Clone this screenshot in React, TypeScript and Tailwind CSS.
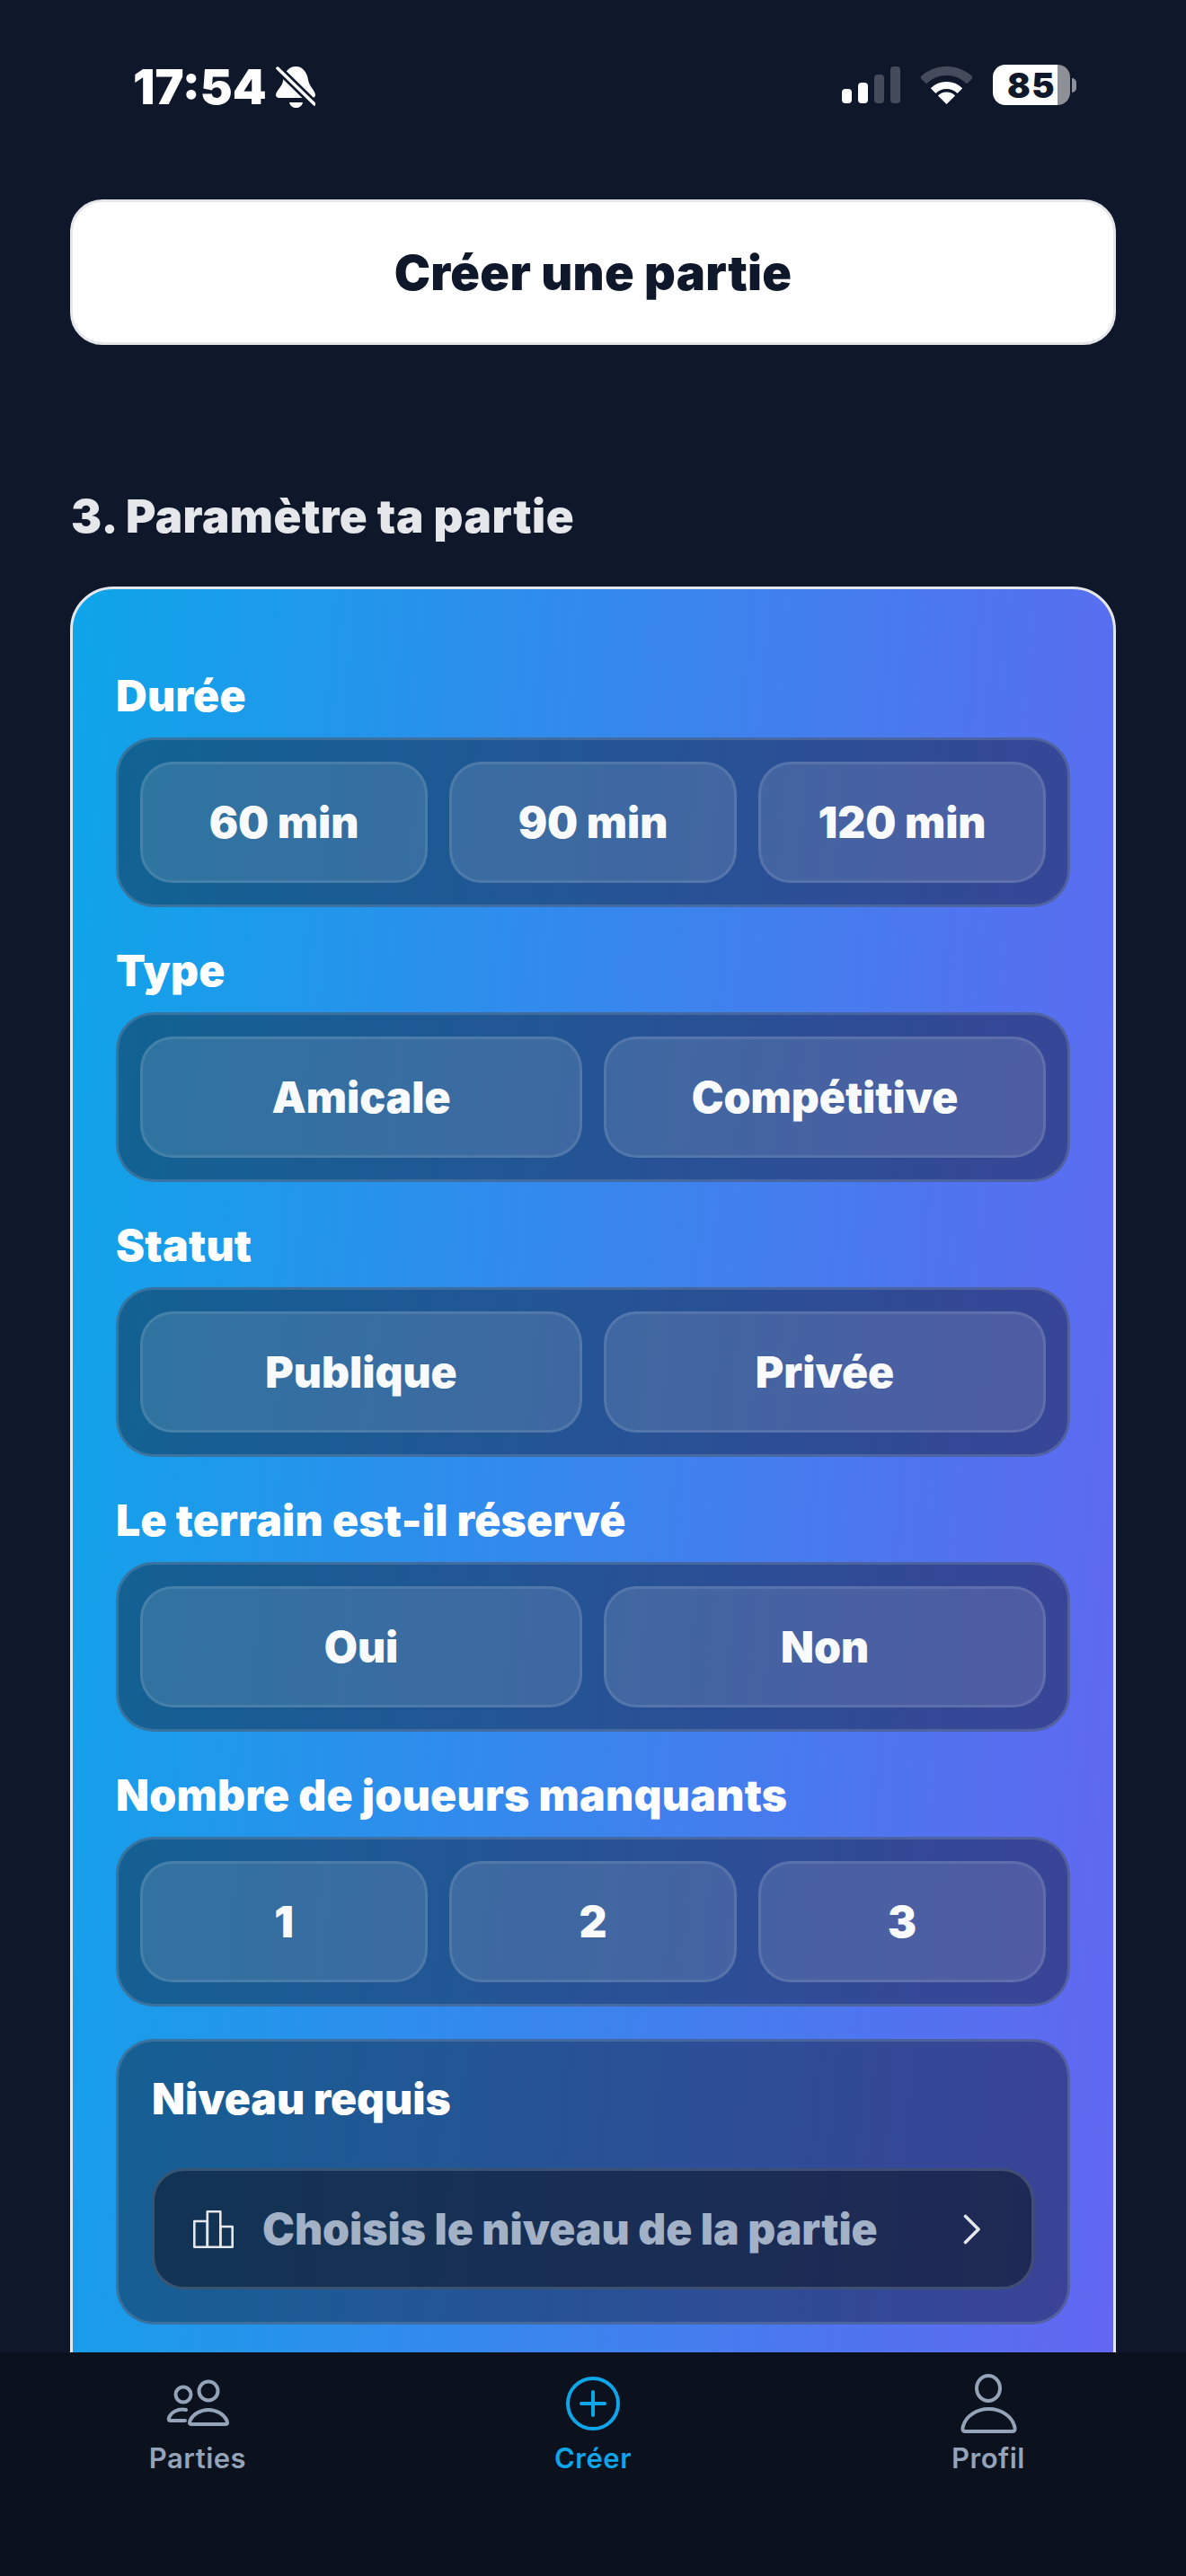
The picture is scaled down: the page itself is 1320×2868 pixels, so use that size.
const rows = [
  { label: "Durée", options: ["60 min", "90 min", "120 min"] },
  { label: "Type", options: ["Amicale", "Compétitive"] },
  { label: "Statut", options: ["Publique", "Privée"] },
  { label: "Le terrain est-il réservé", options: ["Oui", "Non"] },
  { label: "Nombre de joueurs manquants", options: ["1", "2", "3"] },
];

function BellOff() {
  return (
    <svg width="44" height="48" viewBox="0 0 44 48" fill="none">
      <path d="M22 1C31 1 35 9 36 16C37 23 44 28 44 33C44 35 42 36 40 36H4C2 36 0 35 0 33C0 28 7 24 8 17C9 8 14 1 22 1Z" fill="#fff" />
      <path d="M15 41H30C29 45 26 47 22.5 47C19 47 16 45 15 41Z" fill="#fff" />
      <path d="M2 3L43 43" stroke="#0f172a" strokeWidth="9" />
      <path d="M2 3L43 43" stroke="#fff" strokeWidth="3.5" strokeLinecap="round" />
    </svg>
  );
}

function Signal() {
  return (
    <svg width="65" height="41" viewBox="0 0 65 41">
      <rect x="0" y="25" width="11" height="16" rx="4" fill="#fff" />
      <rect x="18" y="18" width="11" height="23" rx="4" fill="#fff" />
      <rect x="36" y="9" width="11" height="32" rx="4" fill="#454b5a" />
      <rect x="54" y="0" width="11" height="41" rx="4" fill="#454b5a" />
    </svg>
  );
}

function Wifi() {
  return (
    <svg width="57" height="42" viewBox="0 0 57 42" fill="none">
      <path d="M2.3 15.8A37 37 0 0 1 54.7 15.8" stroke="#454b5a" strokeWidth="10" />
      <path d="M13.65 27.15A21 21 0 0 1 43.35 27.15" stroke="#fff" strokeWidth="8" />
      <path d="M28.5 42L18.9 32.4A13.5 13.5 0 0 1 38.1 32.4Z" fill="#fff" />
    </svg>
  );
}

function Battery() {
  return (
    <div className="flex items-center">
      <div className="flex h-[45px] w-[86px] items-center justify-center rounded-[14px] bg-[linear-gradient(to_right,#ffffff_84%,#8e9097_84%)] text-[38px] leading-none font-black tracking-[1.5px] text-[#0f172a]">
        85
      </div>
      <div className="ml-[2px] h-[16px] w-[5px] rounded-r-full bg-[#8e9097]" />
    </div>
  );
}

function LevelIcon() {
  return (
    <svg width="45" height="42" viewBox="0 0 45 42" fill="none" stroke="#e5e7eb" strokeWidth="2.6" strokeLinejoin="round">
      <rect x="1.3" y="12" width="14.5" height="28.7" />
      <rect x="15.8" y="1.3" width="14.5" height="39.4" />
      <rect x="30.3" y="18" width="13.4" height="22.7" />
    </svg>
  );
}

function Chevron() {
  return (
    <svg width="20" height="34" viewBox="0 0 20 34" fill="none" stroke="#e5e7eb" strokeWidth="3.6" strokeLinecap="round" strokeLinejoin="round">
      <path d="M2.5 2.5L17 17L2.5 31.5" />
    </svg>
  );
}

function PartiesIcon() {
  return (
    <svg width="80" height="66" viewBox="0 0 80 66" fill="none" stroke="#94a3b8" strokeWidth="4" strokeLinecap="round" strokeLinejoin="round">
      <circle cx="52" cy="19" r="10.5" />
      <circle cx="24" cy="23" r="8.5" />
      <path d="M33 56C30 56 31 53 32 51C35 45 43 40 52 40C61 40 69 45 72 51C73 53 74 56 71 56Z" />
      <path d="M27 40C18 38 10 43 8 49C7 51 8 52 10 52H26" />
    </svg>
  );
}

function CreateIcon() {
  return (
    <svg width="66" height="66" viewBox="0 0 66 66" fill="none" stroke="#0ea5e9" strokeWidth="4" strokeLinecap="round">
      <circle cx="33" cy="33" r="28" />
      <path d="M33 20V46M20 33H46" />
    </svg>
  );
}

function ProfileIcon() {
  return (
    <svg width="70" height="66" viewBox="0 0 70 66" fill="none" stroke="#94a3b8" strokeWidth="4" strokeLinejoin="round">
      <ellipse cx="35" cy="16" rx="13" ry="14" />
      <path d="M9 64C6 64 6 61 7 58C10 47 22 39 35.5 39C49 39 61 47 64 58C65 61 65 64 62 64Z" />
    </svg>
  );
}

function OptionRow({ label, options }: { label: string; options: string[] }) {
  return (
    <div>
      <div className="text-[48px] leading-[54px] font-black tracking-[0.3px] text-white">{label}</div>
      <div className="mt-[19px] flex gap-6 rounded-[42px] border-[3px] border-slate-400/30 bg-[#0f172a]/45 p-6">
        {options.map((o) => (
          <button
            key={o}
            className="flex h-[135px] flex-1 items-center justify-center rounded-[36px] border-[3px] border-white/10 bg-white/12 text-[48px] font-black text-[#f8fafc]"
          >
            {o}
          </button>
        ))}
      </div>
    </div>
  );
}

export default function App() {
  return (
    <div className="flex h-[2868px] w-[1320px] flex-col overflow-hidden bg-[#0f172a] font-['Inter',sans-serif]">
      <main className="h-[2619px] shrink-0 overflow-hidden px-[78px]">
        <div className="flex items-start justify-between pt-[72px] pr-[44px] pl-[70px]">
          <div className="flex items-center gap-[10px]">
            <span className="text-[54px] leading-[50px] font-black text-white">17:54</span>
            <BellOff />
          </div>
          <div className="flex items-center gap-[23px]">
            <Signal />
            <Wifi />
            <Battery />
          </div>
        </div>

        <button className="mt-[100px] flex h-[162px] w-full items-center justify-center rounded-[36px] border-[3px] border-[#e5e7eb] bg-white text-[54px] font-black tracking-[0.3px] text-[#0f172a]">
          Créer une partie
        </button>

        <h2 className="mt-[161px] pl-[1px] text-[51px] leading-[60px] font-black tracking-[0.5px] text-[#e5e7eb]">3. Paramètre ta partie</h2>

        <section className="mt-[48px] rounded-[48px] border-[3px] border-[#e5e7eb] bg-linear-[95deg] from-[#0ea5e9] to-[#6366f1] px-[48px] pt-[92px] pb-[120px]">
          <div className="flex flex-col gap-[44px]">
            {rows.map((r) => (
              <OptionRow key={r.label} label={r.label} options={r.options} />
            ))}
          </div>

          <div className="mt-[36px] rounded-[42px] border-[3px] border-slate-400/30 bg-[#0f172a]/45 px-[37px] pt-[37px] pb-[36px]">
            <div className="text-[48px] leading-[54px] font-black text-white">Niveau requis</div>
            <div className="mt-[50px] flex h-[135px] items-center rounded-[36px] border-[3px] border-slate-400/30 bg-[#0f172a]/60 pr-[56px] pl-[43px]">
              <LevelIcon />
              <span className="ml-[32px] flex-1 text-[48px] font-black text-[#a3b1c6]">Choisis le niveau de la partie</span>
              <Chevron />
            </div>
          </div>
        </section>
      </main>

      <nav className="grid flex-1 grid-cols-3 bg-[#0b121e] pt-[24px]">
        <div className="flex flex-col items-center">
          <PartiesIcon />
          <span className="mt-[10px] text-[31px] leading-[36px] font-semibold tracking-[0.5px] text-[#94a3b8]">Parties</span>
        </div>
        <div className="flex flex-col items-center">
          <CreateIcon />
          <span className="mt-[10px] text-[31px] leading-[36px] font-semibold tracking-[0.5px] text-[#0ea5e9]">Créer</span>
        </div>
        <div className="flex flex-col items-center">
          <ProfileIcon />
          <span className="mt-[10px] text-[31px] leading-[36px] font-semibold tracking-[0.5px] text-[#94a3b8]">Profil</span>
        </div>
      </nav>
    </div>
  );
}
